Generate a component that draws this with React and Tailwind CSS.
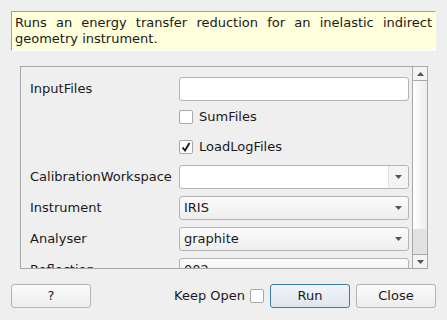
import React from 'react';

const font = { fontFamily: '"DejaVu Sans", sans-serif' };

const Arrow = ({ up }) => (
  <svg width="7" height="4" viewBox="0 0 7 4">
    <path d={up ? 'M0 4 L3.5 0 L7 4 Z' : 'M0 0 L7 0 L3.5 4 Z'} fill="#555" />
  </svg>
);

const Combo = ({ value, editable }) => (
  <div
    className={`flex h-6 w-[230px] items-center rounded-[3px] border border-[#b4b4b4] ${
      editable ? 'bg-white' : 'bg-gradient-to-b from-[#fbfbfb] to-[#eeeeee]'
    }`}
  >
    <span className="flex-1 pl-[4px] text-[13px] text-[#1a1a1a]">{value}</span>
    <div
      className={`flex h-full w-[20px] items-center justify-center ${
        editable ? 'border-l border-[#e2e2e2] bg-[#f4f4f4] rounded-r-[3px]' : ''
      }`}
    >
      <Arrow />
    </div>
  </div>
);

const Check = ({ checked, label }) => (
  <div className="flex items-center gap-[6px]">
    <div className="flex h-[14px] w-[14px] items-center justify-center rounded-[2px] border border-[#a8a8a8] bg-white">
      {checked && (
        <svg width="10" height="10" viewBox="0 0 10 10">
          <path d="M1.5 5.5 L4 8.5 L8.5 1" fill="none" stroke="#111" strokeWidth="1.8" />
        </svg>
      )}
    </div>
    <span className="text-[13px] text-[#1a1a1a]">{label}</span>
  </div>
);

const Row = ({ label, children, className = '' }) => (
  <div className={`flex items-center ${className}`}>
    <div className="w-[149px] text-[13px] text-[#1a1a1a]">{label}</div>
    {children}
  </div>
);

export default function App() {
  return (
    <div className="h-[320px] w-[447px] overflow-hidden bg-[#efefef]" style={font}>
      {/* Description */}
      <div className="pl-[11px] pr-[11px] pt-[11px]">
        <div className="h-[40px] border-l border-t border-[#a0a0a0] border-r border-r-white border-b border-b-white bg-[#ffffdc] px-[3px] pt-[3px] text-[13px] leading-[16px] text-[#1a1a1a] [text-align:justify]">
          Runs an energy transfer reduction for an inelastic indirect geometry instrument.
        </div>
      </div>

      {/* Scroll area */}
      <div className="ml-[20px] mt-[15px] flex h-[203px] w-[408px] border border-[#a8a8a8]">
        <div className="flex-1 overflow-hidden pl-[9px] pt-[10px]">
          <Row label="InputFiles">
            <div className="h-6 w-[230px] rounded-[3px] border border-[#b4b4b4] bg-white" />
          </Row>
          <Row label="" className="mt-[6px] h-[20px]">
            <Check label="SumFiles" />
          </Row>
          <Row label="" className="mt-[10px] h-[20px]">
            <Check checked label="LoadLogFiles" />
          </Row>
          <Row label="CalibrationWorkspace" className="mt-[8px]">
            <Combo value="" editable />
          </Row>
          <Row label="Instrument" className="mt-[7px]">
            <Combo value="IRIS" />
          </Row>
          <Row label="Analyser" className="mt-[7px]">
            <Combo value="graphite" />
          </Row>
          <Row label="Reflection" className="mt-[7px]">
            <Combo value="002" />
          </Row>
        </div>
        <div className="flex w-[15px] flex-col border-l border-[#a8a8a8]">
          <div className="flex h-[14px] items-center justify-center border-b border-[#a8a8a8] bg-[#f4f4f4]">
            <Arrow up />
          </div>
          <div className="h-[148px] bg-gradient-to-r from-white to-[#ececec]" />
          <div className="flex-1 bg-[#e2e2e2]" />
          <div className="flex h-[14px] items-center justify-center border-t border-[#a8a8a8] bg-[#f4f4f4]">
            <Arrow />
          </div>
        </div>
      </div>

      {/* Buttons */}
      <div className="mt-[15px] flex items-center px-[11px]">
        <button className="h-6 w-[80px] rounded-[3px] border border-[#b4b4b4] bg-gradient-to-b from-[#fbfbfb] to-[#ededed] text-[13px] text-[#1a1a1a]">
          ?
        </button>
        <div className="flex-1" />
        <span className="text-[13px] text-[#1a1a1a]">Keep Open</span>
        <div className="ml-[5px] h-[14px] w-[14px] rounded-[2px] border border-[#a8a8a8] bg-white" />
        <button className="ml-[6px] h-6 w-[80px] rounded-[3px] border border-[#3b7cac] bg-gradient-to-b from-[#f2f5f8] to-[#dfe6ee] text-[13px] text-[#1a1a1a]">
          Run
        </button>
        <button className="ml-[6px] h-6 w-[80px] rounded-[3px] border border-[#b4b4b4] bg-gradient-to-b from-[#fbfbfb] to-[#ededed] text-[13px] text-[#1a1a1a]">
          Close
        </button>
      </div>
    </div>
  );
}
